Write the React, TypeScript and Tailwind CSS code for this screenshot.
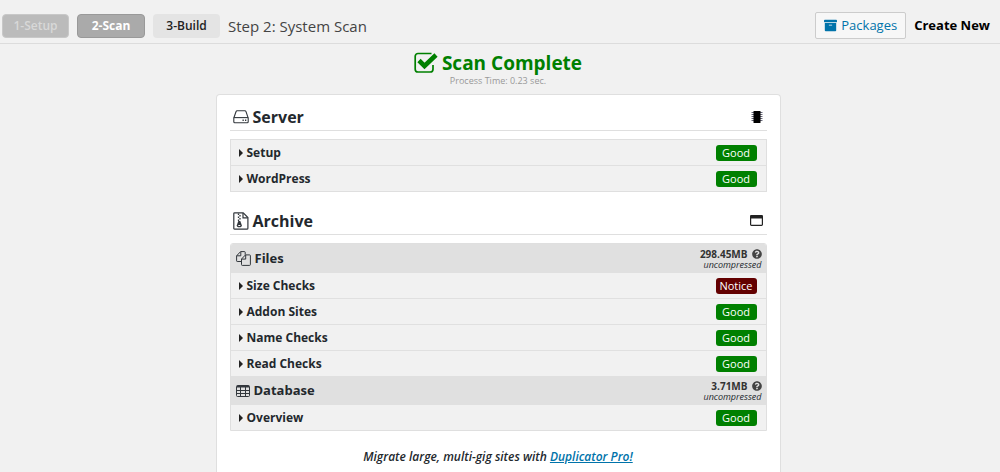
import type { ReactNode } from "react";
import { FaArchive, FaQuestionCircle } from "react-icons/fa";

type Status = "Good" | "Notice";

type Check = {
  name: string;
  status: Status;
};

const serverChecks: Check[] = [
  { name: "Setup", status: "Good" },
  { name: "WordPress", status: "Good" },
];

const fileChecks: Check[] = [
  { name: "Size Checks", status: "Notice" },
  { name: "Addon Sites", status: "Good" },
  { name: "Name Checks", status: "Good" },
  { name: "Read Checks", status: "Good" },
];

const databaseChecks: Check[] = [{ name: "Overview", status: "Good" }];

const CheckIcon = () => (
  <svg viewBox="0 0 24 22" className="w-6 h-[22px]" fill="none">
    <path d="M17.500 1.500H4A2.800 2.800 0 0 0 1.200 4.300V17.200A2.800 2.800 0 0 0 4 20H16.200A2.800 2.800 0 0 0 19 17.200V13" stroke="#008000" strokeWidth="1.700" />
    <path d="M5 8.500L10.500 14L22 3" stroke="#008000" strokeWidth="4.600" />
  </svg>
);

const DriveIcon = () => (
  <svg viewBox="0 0 16 14" className="w-4 h-[14px]" fill="none" stroke="#32373c" strokeWidth="1.1">
    <path d="M.8 8L3 1.700Q3.300 .8 4.200 .8H11.800Q12.700 .8 13 1.700L15.200 8V11.700Q15.200 12.700 14.200 12.700H1.800Q.8 12.700 .8 11.700Z" />
    <path d="M.8 7.600H15.200" />
    <path d="M9.500 10.200H10.800M12 10.200H13.300" strokeWidth="1.500" />
  </svg>
);

const ArchiveIcon = () => (
  <svg viewBox="0 0 16 18" className="w-4 h-[18px]" fill="none" stroke="#32373c" strokeWidth="1.200">
    <path d="M1.600 .8H10.200L14.900 5.500V16.200Q14.900 17.200 13.900 17.200H1.600Q.8 17.200 .8 16.200V1.600Q.8 .8 1.600 .8Z" />
    <path d="M10 1V5.800H14.700" />
    <path d="M5.500 1.500V3M7 3V4.500M5.500 4.500V6M7 6V7.500M5.500 7.500V9" strokeWidth="1.300" />
    <path d="M5.300 9H7.300L8.800 13.200Q8.900 15.300 6.300 15.300Q3.700 15.300 3.800 13.200Z" fill="#32373c" stroke="none" />
    <path d="M5.300 13.500H7.300" stroke="#fff" strokeWidth="1" />
  </svg>
);

const FilesIcon = () => (
  <svg viewBox="0 0 15 15" className="w-[15px] h-[15px]" fill="none" stroke="#32373c">
    <path d="M5.500 10.500H1.200Q.6 10.500 .6 9.900V4.800L4.600 .6H8.500Q9.200 .6 9.200 1.200V3.800" />
    <path d="M4.800 .8V4.800H.8" />
    <path d="M9.500 3.900H13.600Q14.400 3.900 14.400 4.700V13.600Q14.400 14.400 13.600 14.400H6.300Q5.500 14.400 5.500 13.600V8L9.500 3.900ZM9.700 4V8.100H5.700" />
  </svg>
);

const TableIcon = () => (
  <svg viewBox="0 0 14 12" className="w-[14px] h-3" fill="none" stroke="#32373c">
    <rect x=".5" y=".5" width="13" height="11" rx="1" />
    <path d="M1 1.500H13" strokeWidth="2" />
    <path d="M4.500 2V11.500M9.500 2V11.500M1 5.500H13M1 8.500H13" />
  </svg>
);

const ChipIcon = () => (
  <svg viewBox="0 0 12 12" className="w-3 h-3">
    <path d="M.5 1.500H11.500M.5 3.500H11.500M.5 5.500H11.500M.5 7.500H11.500M.5 9.500H11.500" stroke="#667" />
    <rect x="2.500" width="7" height="12" rx=".5" fill="#000" />
  </svg>
);

const WindowIcon = () => (
  <svg viewBox="0 0 13 11" className="w-[13px] h-[11px]" fill="none" stroke="#222">
    <rect x=".6" y=".6" width="11.800" height="9.800" rx=".8" strokeWidth="1.200" />
    <path d="M.5 2H12.500" strokeWidth="3" />
  </svg>
);

const StatusBadge = ({ status }: { status: Status }) => (
  <span
    className={`w-[41px] h-4 rounded-[3px] text-center text-[11px] leading-4 font-medium text-white ${
      status === "Good" ? "bg-[#008000]" : "bg-[#630000]"
    }`}
  >
    {status}
  </span>
);

const CheckRow = ({ check }: { check: Check }) => (
  <button
    type="button"
    className="flex w-full h-[26px] items-center border-b border-[#e0e0e0] bg-[#f1f1f1] pl-2 pr-[9px] text-left last:h-[25px] last:border-b-0"
  >
    <svg viewBox="0 0 4 8" className="w-1 h-2">
      <path d="M0 0L4 4L0 8Z" fill="#222" />
    </svg>
    <span className="ml-1 flex-1 text-xs font-bold">{check.name}</span>
    <StatusBadge status={check.status} />
  </button>
);

const SectionTitle = ({ icon, title, label, action }: { icon: ReactNode; title: string; label: string; action: ReactNode }) => (
  <div className="flex h-7 items-center border-b border-[#dfdfdf] pl-[3px] pr-1">
    {icon}
    <h2 className="ml-1 flex-1 text-base leading-6 font-bold">{title}</h2>
    <button type="button" aria-label={label}>
      {action}
    </button>
  </div>
);

const GroupTitle = ({ icon, title, size }: { icon: ReactNode; title: string; size: string }) => (
  <div className="flex h-[29px] items-center bg-[#e0e0e0] pl-[5px] pr-1">
    {icon}
    <h3 className="ml-1 flex-1 text-[13px] font-bold">{title}</h3>
    <div className="text-right">
      <div className="flex items-center justify-end gap-1 text-[10px] leading-3 font-bold text-[#333]">
        {size}
        <FaQuestionCircle className="w-[10px] h-[10px] text-[#444]" />
      </div>
      <div className="text-[9px] leading-[10px] italic">uncompressed</div>
    </div>
  </div>
);

export default function App() {
  return (
    <div className="min-h-screen bg-[#f1f1f1] font-['Open_Sans','Noto_Sans',sans-serif] text-[#23282d]">
      <header className="flex h-11 items-center border-b border-[#dcdcdc] px-0.5 pt-2">
        <nav className="flex gap-2 text-xs font-semibold">
          <button type="button" disabled className="w-[67px] h-6 rounded border border-[#c8c8c8] bg-[#bbb] text-[#d8d8d8]">
            1-Setup
          </button>
          <button type="button" className="w-[68px] h-6 rounded border border-[#999] bg-[#aaa] font-bold text-white">
            2-Scan
          </button>
          <button type="button" className="w-[67px] h-6 rounded bg-[#e4e4e4] text-[#222]">
            3-Build
          </button>
        </nav>
        <h1 className="ml-2 flex-1 text-[15px] leading-6 text-[#444]">Step 2: System Scan</h1>
        <a href="#packages" className="flex h-[27px] items-center gap-1 rounded-xs border border-[#ccc] bg-[#f7f7f7] px-2 text-[13px] font-medium text-[#0073aa]">
          <FaArchive className="w-[13px] h-[13px]" />
          Packages
        </a>
        <span className="mx-2 text-[13px] font-bold text-black">Create New</span>
      </header>

      <main className="pr-1">
        <div className="flex items-center justify-center gap-1 pt-[7px] text-[#008000]">
          <CheckIcon />
          <div className="text-[19px] leading-6 font-bold">Scan Complete</div>
        </div>
        <p className="text-center text-[9px] leading-3 text-[#999]">Process Time: 0.23 sec.</p>

        <div className="mx-auto mt-[7px] w-full max-w-[565px] rounded-t border border-b-0 border-[#dfdfdf] bg-white px-[13px] pt-2 pb-2">
          <SectionTitle icon={<DriveIcon />} title="Server" label="Server diagnostics" action={<ChipIcon />} />
          <div className="mt-2 border border-[#dfdfdf]">
            {serverChecks.map((check) => (
              <CheckRow key={check.name} check={check} />
            ))}
          </div>

          <div className="mt-[15px]">
            <SectionTitle icon={<ArchiveIcon />} title="Archive" label="Archive details" action={<WindowIcon />} />
          </div>
          <div className="mt-2 overflow-hidden rounded-t-[3px] border border-[#dfdfdf]">
            <GroupTitle icon={<FilesIcon />} title="Files" size="298.45MB" />
            <div>
              {fileChecks.map((check) => (
                <CheckRow key={check.name} check={check} />
              ))}
            </div>
            <GroupTitle icon={<TableIcon />} title="Database" size="3.71MB" />
            <div>
              {databaseChecks.map((check) => (
                <CheckRow key={check.name} check={check} />
              ))}
            </div>
          </div>

          <p className="mt-4 text-center text-xs leading-5 font-semibold italic">
            Migrate large, multi-gig sites with{" "}
            <a href="#pro" className="text-[#0073aa] underline">
              Duplicator Pro!
            </a>
          </p>
        </div>
      </main>
    </div>
  );
}
